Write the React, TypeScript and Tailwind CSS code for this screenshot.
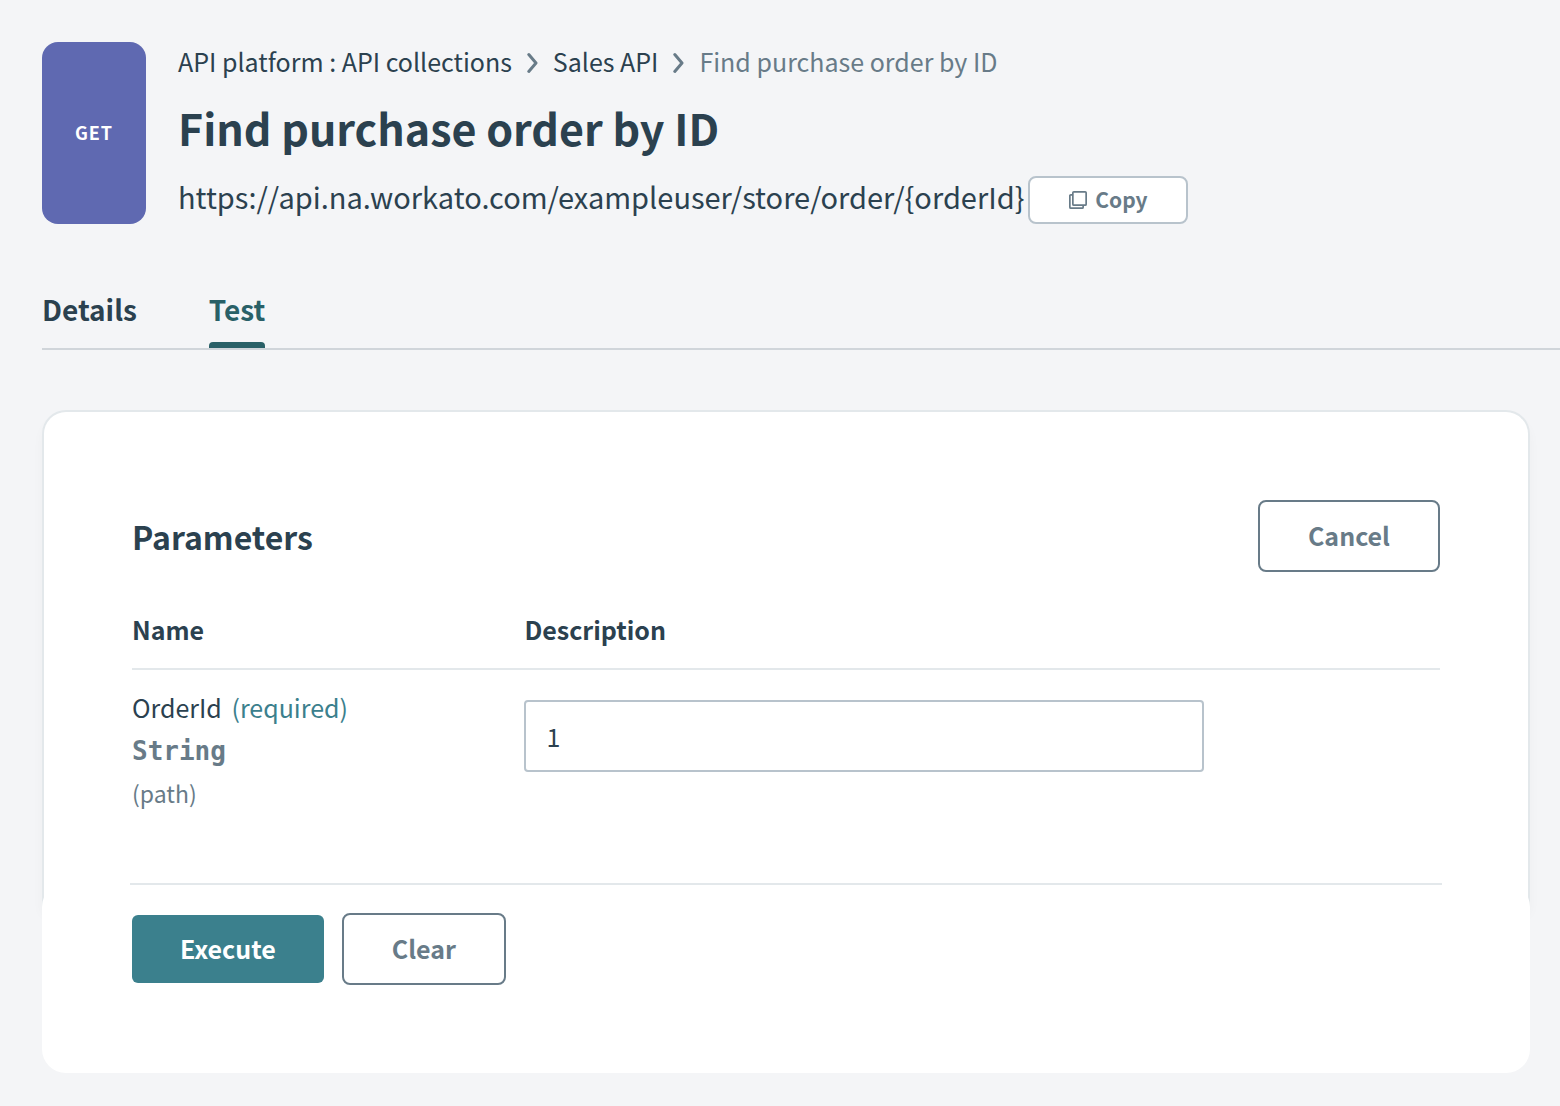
import { useState } from "react";

const ENDPOINT_URL = "https://api.na.workato.com/exampleuser/store/order/{orderId}";

const TABS = ["Details", "Test"];

export default function App() {
  const [tab, setTab] = useState("Test");
  const [orderId, setOrderId] = useState("1");

  return (
    <div className="min-h-screen bg-[#f4f5f7] pt-[42px] pb-8 pl-[42px] font-['Noto_Sans_CJK_SC',sans-serif] text-[#2b414f]">
      <header className="flex gap-8 pr-8">
        <div className="flex w-[104px] shrink-0 items-center justify-center rounded-2xl bg-[#5f69b1] pb-0.5 text-lg font-bold tracking-wider text-white">
          GET
        </div>
        <div className="min-w-0">
          <Breadcrumbs />
          <h1 className="mt-[17px] text-[43px] leading-[60px] font-bold">Find purchase order by ID</h1>
          <div className="mt-[19px] flex items-start gap-1">
            <span className="text-[29px] leading-10">{ENDPOINT_URL}</span>
            <button
              type="button"
              className="flex h-12 w-40 shrink-0 items-center justify-center gap-2 rounded-lg border-2 border-[#b8c3cc] bg-white text-[21px] font-bold text-[#687b88]"
            >
              <CopyIcon />
              Copy
            </button>
          </div>
        </div>
      </header>

      <nav className="mt-[63px] flex gap-[72px] border-b-2 border-[#d0d5da]">
        {TABS.map((name) => (
          <button
            key={name}
            type="button"
            onClick={() => setTab(name)}
            className={
              name === tab
                ? "flex flex-col text-[28px] leading-[44px] font-bold text-[#296067]"
                : "flex flex-col text-[28px] leading-[44px] font-bold"
            }
          >
            {name}
            <span
              className={
                name === tab ? "mt-[11px] h-1.5 w-full rounded-t bg-[#296067]" : "mt-[11px] h-1.5 w-full"
              }
            />
          </button>
        ))}
      </nav>

      <main className="mt-[60px] mr-[30px]">
        <section className="rounded-t-3xl border-2 border-b-0 border-[#e3e8eb] bg-white px-[88px] pt-[88px] pb-[95px] shadow-[0_8px_12px_rgba(43,65,79,0.03)]">
          <div className="flex items-center justify-between">
            <h2 className="text-[32px] leading-10 font-bold">Parameters</h2>
            <OutlineButton>Cancel</OutlineButton>
          </div>

          <table className="mt-8 w-full table-fixed text-left">
            <thead>
              <tr className="border-b-2 border-[#e3e8eb] text-[25px] leading-[50px]">
                <th className="w-[30%] pb-3.5 font-bold">Name</th>
                <th className="pb-3.5 font-bold">Description</th>
              </tr>
            </thead>
            <tbody>
              <tr className="align-top">
                <td className="pt-4 text-[25px] leading-[42px]">
                  <label htmlFor="order-id">
                    OrderId <span className="ml-1 text-[#3b808d]">(required)</span>
                  </label>
                  <div className="font-['DejaVu_Sans_Mono',monospace] text-[26px] leading-[46px] font-bold text-[#687b88]">
                    String
                  </div>
                  <div className="text-[23px] leading-[38px] text-[#687b88]">(path)</div>
                </td>
                <td className="pt-[30px]">
                  <input
                    id="order-id"
                    type="text"
                    value={orderId}
                    onChange={(e) => setOrderId(e.target.value)}
                    className="block h-[72px] w-full max-w-[680px] rounded border-2 border-[#b8c3cc] bg-white px-5 text-[25px]"
                  />
                </td>
              </tr>
            </tbody>
          </table>
        </section>

        {/* Footer panel sits over the bottom edge of the card */}
        <footer className="relative -mt-6 rounded-3xl bg-white px-[88px] pb-[88px]">
          <div className="flex items-center gap-[18px] border-t-2 border-[#e3e8eb] pt-7 pl-0.5">
            <button
              type="button"
              className="h-[68px] rounded-md bg-[#3b808d] px-12 text-[25px] font-bold text-white"
            >
              Execute
            </button>
            <OutlineButton>Clear</OutlineButton>
          </div>
        </footer>
      </main>
    </div>
  );
}

function Breadcrumbs() {
  return (
    <nav className="flex items-center gap-[15px] text-[25px] leading-[38px]">
      <a href="#collections">API platform : API collections</a>
      <ChevronIcon />
      <a href="#sales-api">Sales API</a>
      <ChevronIcon />
      <span className="text-[#687b88]">Find purchase order by ID</span>
    </nav>
  );
}

function OutlineButton({ children }: { children: string }) {
  return (
    <button
      type="button"
      className="h-[72px] rounded-lg border-2 border-[#687b88] bg-white px-12 text-[25px] font-bold text-[#687b88]"
    >
      {children}
    </button>
  );
}

function ChevronIcon() {
  return (
    <svg
      className="mt-1"
      width="11"
      height="20"
      viewBox="0 0 11 20"
      fill="none"
      stroke="#687b88"
      strokeWidth="3"
      strokeLinecap="round"
      strokeLinejoin="round"
      aria-hidden
    >
      <path d="M1.8 1.6L9 10l-7.2 8.4" />
    </svg>
  );
}

function CopyIcon() {
  return (
    <svg
      width="18"
      height="18"
      viewBox="0 0 18 18"
      fill="none"
      stroke="currentColor"
      strokeWidth="1.7"
      aria-hidden
    >
      <rect x="3.85" y="0.85" width="13.3" height="13.3" rx="1" />
      <path d="M3.85 3.85H1.85a1 1 0 0 0-1 1v11.3a1 1 0 0 0 1 1h11.3a1 1 0 0 0 1-1v-2" />
    </svg>
  );
}
